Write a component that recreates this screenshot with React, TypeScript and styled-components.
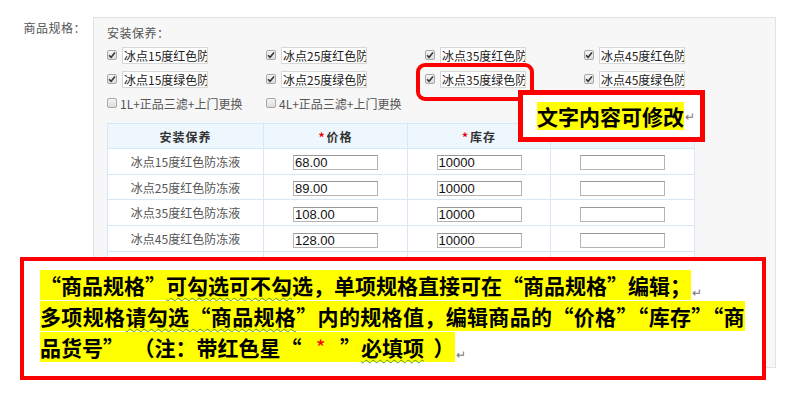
import styled, { createGlobalStyle } from 'styled-components';

const GlobalStyle = createGlobalStyle`
  body {
    margin: 0;
    background: #fff;
    font-family: "Noto Sans CJK SC", "Liberation Sans", sans-serif;
  }
`;

const topOptions = [
  '冰点15度红色防冻液',
  '冰点25度红色防冻液',
  '冰点35度红色防冻液',
  '冰点45度红色防冻液',
  '冰点15度绿色防冻液',
  '冰点25度绿色防冻液',
  '冰点35度绿色防冻液',
  '冰点45度绿色防冻液',
];

const rows = [
  { name: '冰点15度红色防冻液', price: '68.00', stock: '10000' },
  { name: '冰点25度红色防冻液', price: '89.00', stock: '10000' },
  { name: '冰点35度红色防冻液', price: '108.00', stock: '10000' },
  { name: '冰点45度红色防冻液', price: '128.00', stock: '10000' },
  { name: '冰点15度绿色防冻液', price: '68.00', stock: '10000' },
  { name: '冰点25度绿色防冻液', price: '89.00', stock: '10000' },
];

const Check = ({ checked }: { checked?: boolean }) => (
  <CheckBox>
    {checked && (
      <svg width="8" height="8" viewBox="0 0 8 8">
        <path d="M1 4.2 L3.1 6.3 L7 1.6" fill="none" stroke="#333" strokeWidth="1.5" />
      </svg>
    )}
  </CheckBox>
);

const App = () => {
  return (
    <Page>
      <GlobalStyle />
      <FieldLabel>商品规格：</FieldLabel>
      <Panel>
        <SectionTitle>安装保养：</SectionTitle>
        <OptionGrid>
          {topOptions.map((o) => (
            <Option key={o}>
              <Check checked />
              <NameInput>{o}</NameInput>
            </Option>
          ))}
          <Option>
            <Check />
            <OptionText>1L+正品三滤+上门更换</OptionText>
          </Option>
          <Option>
            <Check />
            <OptionText>4L+正品三滤+上门更换</OptionText>
          </Option>
        </OptionGrid>
        <SkuTable>
          <colgroup>
            <col style={{ width: 156 }} />
            <col style={{ width: 144 }} />
            <col style={{ width: 143 }} />
            <col style={{ width: 144 }} />
          </colgroup>
          <thead>
            <tr>
              <Th>安装保养</Th>
              <Th>
                <Star>*</Star>价格
              </Th>
              <Th>
                <Star>*</Star>库存
              </Th>
              <Th />
            </tr>
          </thead>
          <tbody>
            {rows.map((r) => (
              <tr key={r.name}>
                <Td>{r.name}</Td>
                <Td>
                  <CellInput>{r.price}</CellInput>
                </Td>
                <Td>
                  <CellInput>{r.stock}</CellInput>
                </Td>
                <Td>
                  <CellInput />
                </Td>
              </tr>
            ))}
          </tbody>
        </SkuTable>
      </Panel>

      <RoundMark />
      <SmallNote>
        <Mark>文字内容可修改</Mark>
        <Para>↵</Para>
      </SmallNote>
      <BigNote>
        <NoteLine>
          <Mark>
            “商品规格”<Wavy>可勾选可不勾</Wavy>选，单项规格直接可在“商品规格”编辑；
          </Mark>
          <Para>↵</Para>
        </NoteLine>
        <NoteLine $spacing={0.35}>
          <Mark>
            多项规格<Wavy>请勾选“商品规格</Wavy>”内的规格值，编辑商品的“价格”“库存”“商
          </Mark>
        </NoteLine>
        <NoteLine>
          <Mark>
            品货号”  （注：带红色星“{'   '}<RedStar>*</RedStar>{'   '}”<Wavy>必填项</Wavy>{'  '}）
          </Mark>
          <Para>↵</Para>
        </NoteLine>
      </BigNote>
    </Page>
  );
};

export default App;

const Page = styled.div`
  position: relative;
  width: 801px;
  height: 395px;
  display: flex;
  align-items: flex-start;
  padding-top: 17px;
  box-sizing: border-box;
  overflow: hidden;
`;

const FieldLabel = styled.div`
  width: 93px;
  box-sizing: border-box;
  padding: 2px 7px 0 0;
  text-align: right;
  font-size: 12px;
  line-height: 18px;
  color: #555;
  letter-spacing: 0.5px;
`;

const Panel = styled.div`
  width: 683px;
  height: 351px;
  box-sizing: border-box;
  padding: 6px 0 0 13px;
  background: #f7f7f7;
  border: 1px solid #e2e2e2;
  overflow: hidden;
`;

const SectionTitle = styled.div`
  font-size: 12px;
  line-height: 18px;
  color: #555;
  letter-spacing: 0.5px;
`;

const OptionGrid = styled.div`
  display: grid;
  grid-template-columns: repeat(4, 159px);
  grid-auto-rows: 24px;
  margin-top: 1px;
`;

const Option = styled.div`
  display: flex;
  align-items: center;
`;

const CheckBox = styled.span`
  width: 10px;
  height: 10px;
  box-sizing: border-box;
  border: 1px solid #a9a9a9;
  border-radius: 2px;
  background: linear-gradient(#f4f4f4, #dcdcdc);
  display: flex;
  align-items: center;
  justify-content: center;
  margin-right: 5px;
`;

const NameInput = styled.div`
  width: 86px;
  height: 17px;
  box-sizing: border-box;
  background: #fff;
  border: 1px solid #d8d8d8;
  padding-left: 1px;
  font-size: 12px;
  line-height: 15px;
  color: #222;
  white-space: nowrap;
  overflow: hidden;
`;

const OptionText = styled.span`
  font-size: 12px;
  color: #555;
  margin-left: -2px;
`;

const SkuTable = styled.table`
  border-collapse: collapse;
  table-layout: fixed;
  width: 587px;
  margin-top: 8px;
  background: #fff;
`;

const Th = styled.th`
  height: 24px;
  padding: 0;
  border: 1px solid #d6e7f8;
  background: #eef7fe;
  font-size: 12px;
  font-weight: 700;
  color: #333;
  letter-spacing: 1px;
`;

const Star = styled.span`
  color: #e00;
  margin-right: 1px;
`;

const Td = styled.td`
  height: 24.7px;
  padding: 0;
  border: 1px solid #d6e7f8;
  text-align: center;
  font-size: 12px;
  color: #555;
`;

const CellInput = styled.div`
  display: inline-block;
  vertical-align: middle;
  width: 85px;
  height: 15px;
  box-sizing: border-box;
  border: 1px solid #b4b4b4;
  border-top-color: #999;
  background: #fff;
  text-align: left;
  padding-left: 1px;
  font-family: "Liberation Sans", Arial, sans-serif;
  font-size: 13px;
  line-height: 13px;
  color: #111;
`;

const RoundMark = styled.div`
  position: absolute;
  left: 416px;
  top: 63px;
  width: 118px;
  height: 38px;
  box-sizing: border-box;
  border: 4px solid #f00;
  border-radius: 9px;
`;

const SmallNote = styled.div`
  position: absolute;
  left: 518px;
  top: 90px;
  width: 187px;
  height: 52px;
  box-sizing: border-box;
  border: 5px solid #f00;
  background: #fff;
  display: flex;
  align-items: center;
  padding-left: 14px;
  font-size: 21px;
  font-weight: 700;
  line-height: 28px;
`;

const Mark = styled.span`
  background: #ff0;
  color: #000;
  white-space: pre;
`;

const Para = styled.span`
  font-size: 12px;
  font-weight: 400;
  color: #777;
  margin-left: 1px;
  vertical-align: -3px;
  letter-spacing: 0;
`;

const BigNote = styled.div`
  position: absolute;
  left: 20px;
  top: 257px;
  width: 746px;
  height: 123px;
  box-sizing: border-box;
  border: 4px solid #f00;
  background: #fff;
  padding: 9px 0 0 16px;
  font-size: 21px;
  font-weight: 700;
`;

const NoteLine = styled.div<{ $spacing?: number }>`
  height: 31px;
  line-height: 31px;
  white-space: nowrap;
  letter-spacing: ${(p) => p.$spacing ?? 0}px;
`;

const Wavy = styled.span`
  text-decoration: underline wavy #4a9a3a;
  text-decoration-thickness: 1px;
  text-underline-offset: 3px;
`;

const RedStar = styled.span`
  color: #f00;
  font-weight: 400;
`;
